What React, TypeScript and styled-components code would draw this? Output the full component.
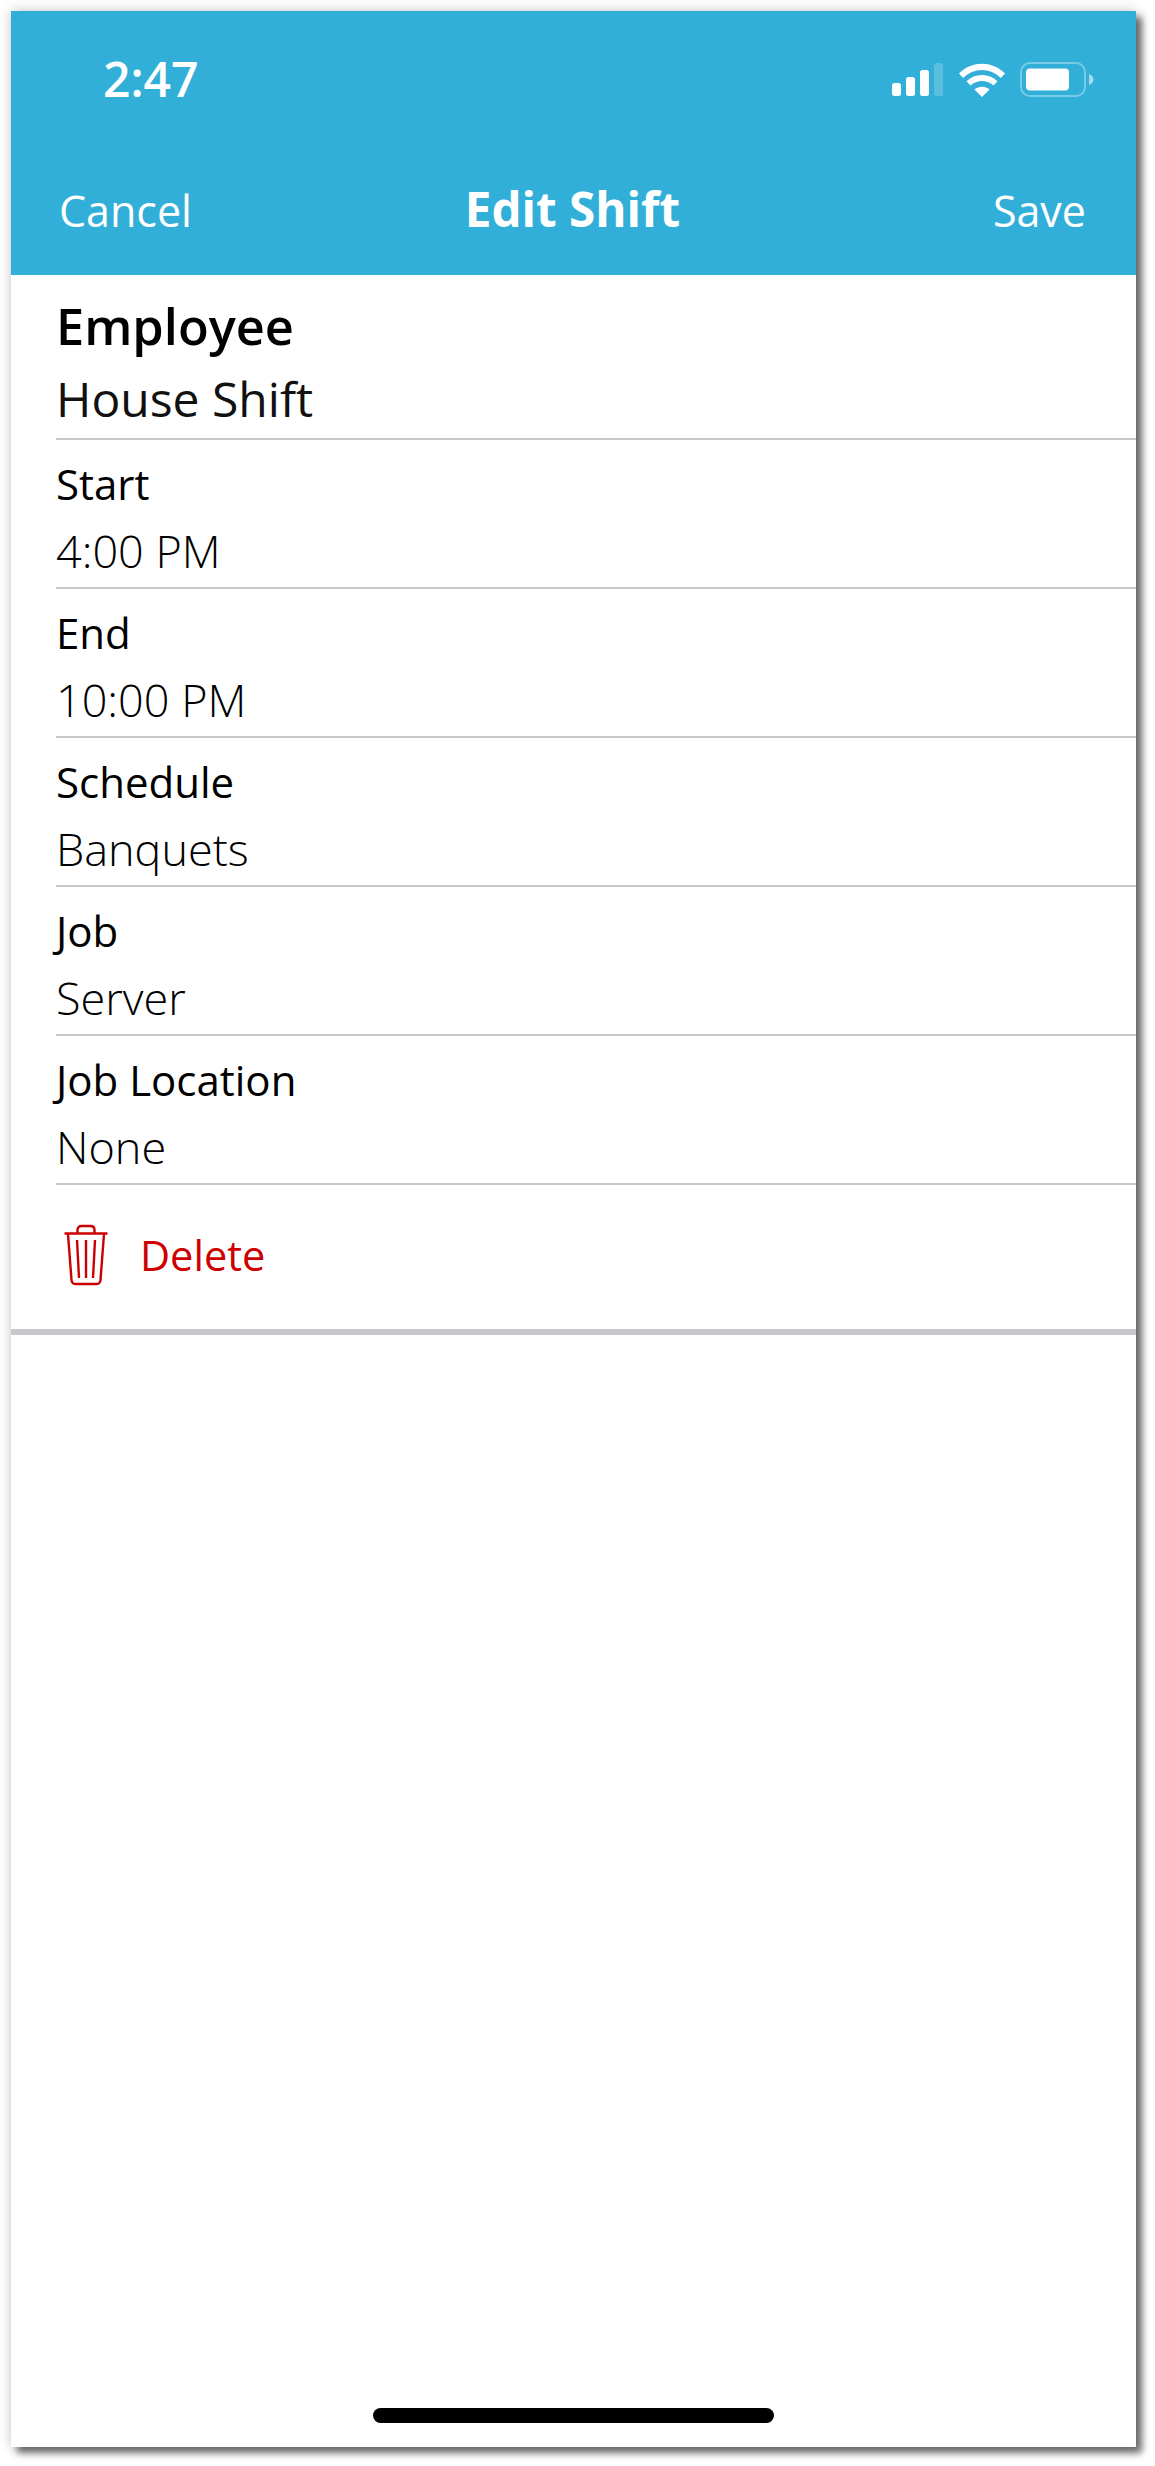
import React from "react";
import styled, { createGlobalStyle } from "styled-components";

const Global = createGlobalStyle`
  html, body { margin: 0; padding: 0; background: #fff; }
  body { font-family: "Open Sans", "Liberation Sans", sans-serif; }
`;

const Page = styled.div`
  width: 1155px;
  height: 2466px;
  padding: 11px 19px 19px 11px;
  box-sizing: border-box;
  overflow: hidden;
`;

const Phone = styled.main`
  width: 1125px;
  height: 2436px;
  background: #fff;
  display: flex;
  flex-direction: column;
  box-shadow: 6px 6px 7px rgba(0, 0, 0, 0.55), 0 0 12px rgba(0, 0, 0, 0.22);
`;

const Header = styled.header`
  background: #31afd8;
  height: 264px;
  color: #fff;
  display: flex;
  flex-direction: column;
  flex-shrink: 0;
`;

const StatusBar = styled.div`
  height: 170px;
  padding: 45px 42px 0 92px;
  box-sizing: border-box;
  display: flex;
  justify-content: space-between;
  align-items: flex-start;
`;

const Time = styled.span`
  font-size: 48px;
  font-weight: 600;
  line-height: 46px;
`;

const StatusIcons = styled.div`
  display: flex;
  align-items: center;
  gap: 15px;
  margin-top: 6px;
`;

const NavBar = styled.nav`
  display: grid;
  grid-template-columns: 1fr auto 1fr;
  align-items: center;
  padding: 0 50px 0 48px;
  height: 60px;
`;

const NavButton = styled.span<{ $end?: boolean }>`
  font-size: 43px;
  line-height: 60px;
  text-align: ${(p) => (p.$end ? "right" : "left")};
`;

const Title = styled.h1`
  margin: 0;
  font-size: 47.6px;
  font-weight: 700;
  line-height: 60px;
  position: relative;
  top: -2px;
`;

const EmployeeRow = styled.section`
  margin-left: 45px;
  height: 165px;
  box-sizing: border-box;
  padding-top: 16px;
  border-bottom: 2px solid #c8c7cc;
`;

const EmployeeLabel = styled.div`
  font-size: 50.5px;
  font-weight: 600;
  line-height: 70px;
  color: #000;
`;

const EmployeeValue = styled.div`
  font-size: 48px;
  line-height: 76px;
  color: #111;
`;

const Row = styled.section`
  margin-left: 45px;
  height: 149px;
  box-sizing: border-box;
  padding-top: 14px;
  border-bottom: 2px solid #c8c7cc;
`;

const Label = styled.div`
  font-size: 42px;
  line-height: 60px;
  color: #000;
`;

const Value = styled.div`
  font-size: 45px;
  font-weight: 300;
  line-height: 73px;
  color: #000;
`;

const DeleteRow = styled.section`
  height: 150px;
  flex-shrink: 0;
  box-sizing: border-box;
  padding: 0 0 4px 53px;
  display: flex;
  align-items: center;
  gap: 32px;
  border-bottom: 6px solid #c8c7cc;
`;

const DeleteText = styled.span`
  font-size: 41.5px;
  color: #cc0000;
`;

const HomeBar = styled.div`
  width: 401px;
  height: 15px;
  border-radius: 8px;
  background: #000;
  margin: auto auto 24px;
`;

const rows = [
  ["Start", "4:00 PM"],
  ["End", "10:00 PM"],
  ["Schedule", "Banquets"],
  ["Job", "Server"],
  ["Job Location", "None"],
];

const Signal = () => (
  <svg width="52" height="33" viewBox="0 0 52 33">
    <rect x="0" y="20" width="9" height="13" rx="2.5" fill="#fff" />
    <rect x="14" y="14" width="9" height="19" rx="2.5" fill="#fff" />
    <rect x="28" y="7" width="9" height="26" rx="2.5" fill="#fff" />
    <rect x="42" y="0" width="9" height="33" rx="2.5" fill="#fff" fillOpacity="0.2" />
  </svg>
);

const Wifi = () => (
  <svg width="46" height="34" viewBox="0 0 46 34">
    <path d="M23 34 L15.5 26.6 C19.5 22.8 26.5 22.8 30.5 26.6 Z" fill="#fff" />
    <path d="M11.5 22.4 L7.5 18.3 C16 10 30 10 38.5 18.3 L34.5 22.4 C28 16.4 18 16.4 11.5 22.4 Z" fill="#fff" />
    <path d="M4.2 15 L0 10.6 C12.5 -2.6 33.5 -2.6 46 10.6 L41.8 15 C31.5 4.2 14.5 4.2 4.2 15 Z" fill="#fff" />
  </svg>
);

const Battery = () => (
  <svg width="74" height="35" viewBox="0 0 74 35">
    <rect x="1" y="1" width="64" height="33" rx="9" fill="none" stroke="#fff" strokeOpacity="0.35" strokeWidth="2" />
    <rect x="6" y="6.5" width="43" height="22" rx="4" fill="#fff" />
    <path d="M69 12 C72 13 73.5 15 73.5 17.5 C73.5 20 72 22 69 23 Z" fill="#fff" fillOpacity="0.55" />
  </svg>
);

const Trash = () => (
  <svg width="44" height="62" viewBox="0 0 44 62" fill="none" stroke="#cc0000" strokeWidth="2.4">
    <path d="M0.5 9.5 H43.5" />
    <path d="M13.5 9 V6 C13.5 3.5 15 2 17.5 2 H26.5 C29 2 30.5 3.5 30.5 6 V9" />
    <path d="M4 10 L7.5 56 C7.7 58.5 9 60 11.5 60 H32.5 C35 60 36.3 58.5 36.5 56 L40 10" />
    <path d="M13 16 L15 54 M22 16 V54 M31 16 L29 54" />
  </svg>
);

export default function App() {
  return (
    <Page>
      <Global />
      <Phone>
        <Header>
          <StatusBar>
            <Time>2:47</Time>
            <StatusIcons>
              <Signal />
              <Wifi />
              <Battery />
            </StatusIcons>
          </StatusBar>
          <NavBar>
            <NavButton>Cancel</NavButton>
            <Title>Edit Shift</Title>
            <NavButton $end>Save</NavButton>
          </NavBar>
        </Header>
        <EmployeeRow>
          <EmployeeLabel>Employee</EmployeeLabel>
          <EmployeeValue>House Shift</EmployeeValue>
        </EmployeeRow>
        {rows.map(([label, value]) => (
          <Row key={label}>
            <Label>{label}</Label>
            <Value>{value}</Value>
          </Row>
        ))}
        <DeleteRow>
          <Trash />
          <DeleteText>Delete</DeleteText>
        </DeleteRow>
        <HomeBar />
      </Phone>
    </Page>
  );
}
